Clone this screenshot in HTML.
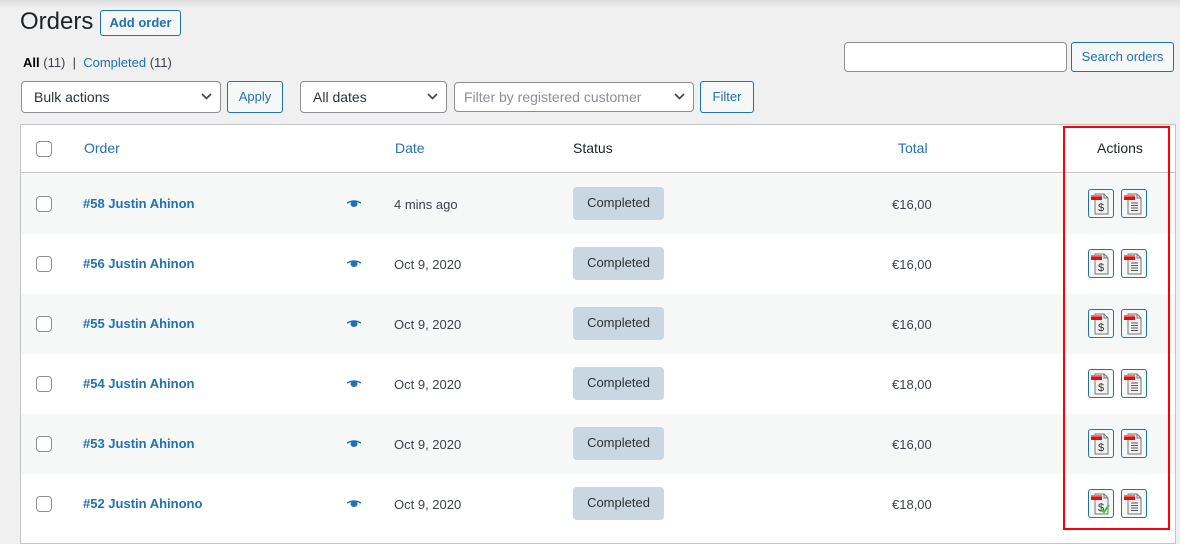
<!DOCTYPE html>
<html><head><meta charset="utf-8"><style>
*{box-sizing:border-box;margin:0;padding:0}
body{width:1180px;height:537px;overflow:hidden;background:#f0f0f1;font-family:"Liberation Sans",sans-serif;font-size:13px;color:#3c434a;position:relative}
.a{position:absolute}
.btn{position:absolute;border:1px solid #2271b1;border-radius:3px;background:#f6f7f7;color:#2271b1;font-size:13px;text-align:center}
.sel{position:absolute;border:1px solid #8c8f94;border-radius:4px;background:#fff;font-size:14px;color:#2c3338;padding-left:12px}
.sel svg{position:absolute;right:8px;top:11px}
.blue{color:#2271b1}
.row{position:absolute;left:21px;width:1154px;height:60px}
.cb{position:absolute;left:15px;width:16px;height:16px;border:1px solid #8c8f94;border-radius:4px;background:#fff}
.st{position:absolute;left:552px;width:91px;height:33px;background:#c8d7e1;border-radius:4px;color:#2c3338;font-size:13px;text-align:center;line-height:32px}
.ib{position:absolute;width:26px;height:29px;border:1px solid #2271b1;border-radius:3px;background:#f6f7f7}
</style></head><body>
<div class="a" style="left:0;top:0;width:1180px;height:8px;background:linear-gradient(#dcdcdc,#f0f0f1)"></div>
<div class="a" style="left:20px;top:8px;font-size:24px;color:#1d2327">Orders</div>
<div class="btn" style="left:100px;top:10px;width:81px;height:26px;line-height:24px;font-weight:bold">Add order</div>
<div class="a" style="left:23px;top:55px;font-size:13px"><b style="color:#000">All</b> (11) &nbsp;| &nbsp;<span class="blue">Completed</span> (11)</div>
<div class="sel" style="left:21px;top:81px;width:200px;height:32px;line-height:30px">Bulk actions<svg width="11" height="8"><path d="M1 1l4.5 4.5L10 1" stroke="#3c434a" stroke-width="1.6" fill="none"/></svg></div>
<div class="btn" style="left:227px;top:81px;width:56px;height:32px;line-height:30px">Apply</div>
<div class="sel" style="left:300px;top:81px;width:147px;height:32px;line-height:30px">All dates<svg width="11" height="8"><path d="M1 1l4.5 4.5L10 1" stroke="#3c434a" stroke-width="1.6" fill="none"/></svg></div>
<div class="sel" style="left:454px;top:82px;width:240px;height:30px;line-height:28px;color:#8c8f94;padding-left:9px">Filter by registered customer<svg width="11" height="8" style="top:10px"><path d="M1 1l4.5 4.5L10 1" stroke="#3c434a" stroke-width="1.6" fill="none"/></svg></div>
<div class="btn" style="left:700px;top:81px;width:54px;height:32px;line-height:30px">Filter</div>
<div class="a" style="left:844px;top:42px;width:223px;height:30px;border:1px solid #8c8f94;border-radius:4px;background:#fff"></div>
<div class="btn" style="left:1071px;top:42px;width:103px;height:30px;line-height:28px">Search orders</div>

<div class="a" style="left:20px;top:124px;width:1156px;height:420px;border:1px solid #c3c4c7;background:#fff"></div>
<div class="row" style="top:125px;height:48px;border-bottom:1px solid #c3c4c7;font-size:14px">
<div class="cb" style="top:16px"></div>
<div class="a blue" style="left:63px;top:15px">Order</div>
<div class="a blue" style="left:374px;top:15px">Date</div>
<div class="a" style="left:552px;top:15px;color:#1d2327">Status</div>
<div class="a blue" style="left:877px;top:15px">Total</div>
<div class="a" style="left:1076px;top:15px;color:#1d2327">Actions</div>
</div>

<div id="rows"></div>
<script>
var d=[["#58 Justin Ahinon","4 mins ago","€16,00"],["#56 Justin Ahinon","Oct 9, 2020","€16,00"],["#55 Justin Ahinon","Oct 9, 2020","€16,00"],["#54 Justin Ahinon","Oct 9, 2020","€18,00"],["#53 Justin Ahinon","Oct 9, 2020","€16,00"],["#52 Justin Ahinono","Oct 9, 2020","€18,00"]];
var doc='<svg width="20" height="23" viewBox="0 0 20 23"><path d="M5 2h9l4 4v16H5z" fill="#f2f2f2" stroke="#777"/><path d="M14 2v4h4" fill="none" stroke="#777"/><rect x="1" y="3" width="11" height="5" fill="#e01010"/><rect x="1" y="3" width="11" height="1.7" fill="#ff7070"/>';
var h='';
d.forEach(function(r,i){
 var t=174+i*60;
 var ok=i==5;
 h+='<div class="row" style="top:'+t+'px;background:'+(i%2?'#fff':'#f6f7f7')+'">'+
 '<div class="cb" style="top:22px"></div>'+
 '<div class="a blue" style="left:62px;top:22px;font-weight:bold">'+r[0]+'</div>'+
 '<svg class="a" style="left:326px;top:26px" width="14" height="8"><path d="M0 3Q7 -1 14 3" stroke="#2271b1" stroke-width="1.5" fill="none"/><ellipse cx="7" cy="4" rx="3.5" ry="3" fill="#2271b1"/></svg>'+
 '<div class="a" style="left:373px;top:23px">'+r[1]+'</div>'+
 '<div class="st" style="top:13px">Completed</div>'+
 '<div class="a" style="left:871px;top:23px">'+r[2]+'</div>'+
 '<div class="ib" style="left:1067px;top:15px"><div class="a" style="left:1px;top:2px">'+doc+'<text x="8" y="19" font-size="11" fill="#333" font-family="Liberation Sans">$</text>'+(ok?'<path d="M11 17l3 3 5-7" stroke="#3c3" stroke-width="2" fill="none"/>':'')+'</svg></div></div>'+
 '<div class="ib" style="left:1100px;top:15px"><div class="a" style="left:1px;top:2px">'+doc+'<path d="M8 11h7M8 13.5h7M8 16h7M8 18.5h7" stroke="#555"/></svg></div></div>'+
 '</div>';
});
document.getElementById('rows').innerHTML=h;
</script>
<div class="a" style="left:1063px;top:126px;width:107px;height:404px;border:2px solid #f00"></div>
</body></html>
